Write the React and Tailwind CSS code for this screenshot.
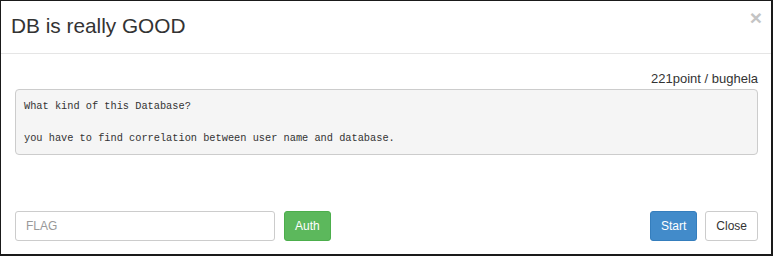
export default function App() {
  return (
    <div
      className="w-[773px] h-[256px] bg-white border-[#1a1a1a] border-l border-t border-r-2 border-b-2 flex flex-col text-[#333]"
      style={{ fontFamily: '"Liberation Sans", Arial, sans-serif' }}
    >
      <div className="h-[53px] border-b border-[#e5e5e5] flex items-start justify-between pl-[10px] pr-[9px]">
        <h4 className="pt-[13px] text-[20.8px] leading-[24px] font-normal">DB is really GOOD</h4>
        <span className="pt-[5px] text-[21px] leading-[24px] font-bold text-[#c4c4c4]">×</span>
      </div>
      <div className="h-[140px] pl-[14px] pr-[13px] pt-[15px]">
        <div className="text-right text-[13px] leading-[19px]">221point / bughela</div>
        <pre
          className="mt-[1px] bg-[#f5f5f5] border border-[#ccc] rounded-[4px] px-[8px] pt-[9px] pb-[8px] text-[10.3px] leading-[15.8px] text-[#333] whitespace-pre-wrap"
          style={{ fontFamily: '"Liberation Mono", "DejaVu Sans Mono", monospace' }}
        >
{`What kind of this Database?

you have to find correlation between user name and database.`}
        </pre>
      </div>
      <div className="flex-1 flex items-start justify-between pl-[14px] pr-[13px] pt-[17px]">
        <div className="flex items-center gap-[9px]">
          <input
            placeholder="FLAG"
            className="w-[260px] h-[30px] border border-[#ccc] rounded-[3px] px-[10px] text-[12px] placeholder:text-[#999] outline-none"
            style={{ fontFamily: '"Liberation Sans", Arial, sans-serif' }}
          />
          <button className="h-[30px] px-[10px] rounded-[3px] bg-[#5cb85c] border border-[#4cae4c] text-white text-[12px]">
            Auth
          </button>
        </div>
        <div className="flex items-center gap-[8px]">
          <button className="h-[30px] px-[10px] rounded-[3px] bg-[#428bca] border border-[#357ebd] text-white text-[12px]">
            Start
          </button>
          <button className="h-[30px] px-[10px] rounded-[3px] bg-white border border-[#ccc] text-[#333] text-[12px]">
            Close
          </button>
        </div>
      </div>
    </div>
  );
}
